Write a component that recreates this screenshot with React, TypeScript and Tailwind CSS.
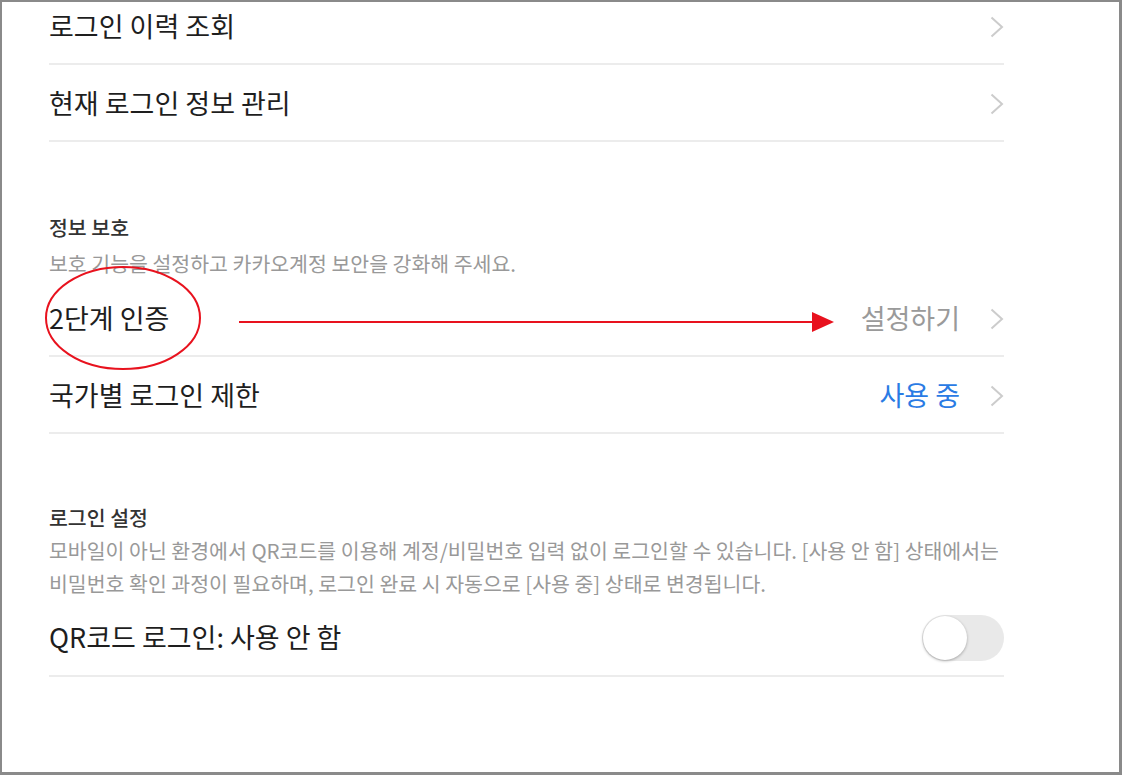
const font = { fontFamily: '"Noto Sans CJK KR", "Noto Sans", sans-serif' };

function Chevron() {
  return (
    <svg width="14" height="22" viewBox="0 0 14 22" fill="none" className="shrink-0">
      <path d="M1.5 1.5 L12 11 L1.5 20.5" stroke="#cccccc" strokeWidth="2" />
    </svg>
  );
}

function Row({ label, value, valueClass }: { label: string; value?: string; valueClass?: string }) {
  return (
    <>
      <div className="h-[75px] flex items-center justify-between pt-[2px]">
        <span className="text-[27px] text-[#1e1e1e]">{label}</span>
        <div className="flex items-center gap-[30px]">
          {value && <span className={`text-[27px] ${valueClass}`}>{value}</span>}
          <Chevron />
        </div>
      </div>
      <div className="h-[2px] bg-[#ececec]" />
    </>
  );
}

export default function App() {
  return (
    <div
      className="relative w-[1122px] h-[775px] overflow-hidden bg-white border-l-2 border-t-2 border-r-[3px] border-b-[3px] border-[#8a8a8a]"
      style={font}
    >
      <div className="ml-[47px] w-[955px] -mt-[14px]">
        <Row label="로그인 이력 조회" />
        <Row label="현재 로그인 정보 관리" />

        {/* 정보 보호 */}
        <div className="pt-[71px]">
          <div className="text-[20.5px] leading-[28px] font-medium text-[#333]">정보 보호</div>
          <div className="mt-[6px] text-[20.5px] leading-[33px] text-[#999]">
            보호 기능을 설정하고 카카오계정 보안을 강화해 주세요.
          </div>
        </div>
        <Row label="2단계 인증" value="설정하기" valueClass="text-[#9a9a9a]" />
        <Row label="국가별 로그인 제한" value="사용 중" valueClass="text-[#2a7be4]" />

        {/* 로그인 설정 */}
        <div className="pt-[69px]">
          <div className="text-[20.5px] leading-[28px] font-medium text-[#333]">로그인 설정</div>
          <div className="mt-[3px] text-[20.5px] leading-[33px] text-[#999]">
            모바일이 아닌 환경에서 QR코드를 이용해 계정/비밀번호 입력 없이 로그인할 수 있습니다. [사용 안 함] 상태에서는
            비밀번호 확인 과정이 필요하며, 로그인 완료 시 자동으로 [사용 중] 상태로 변경됩니다.
          </div>
        </div>
        <div className="h-[75px] flex items-center justify-between">
          <span className="text-[27px] text-[#1e1e1e]">QR코드 로그인: 사용 안 함</span>
          <div className="w-[82px] h-[46px] rounded-full bg-[#e9e9e9] flex items-center px-[1px]">
            <div className="w-[44px] h-[44px] rounded-full bg-white shadow-[0_1px_3px_rgba(0,0,0,0.3)]" />
          </div>
        </div>
        <div className="h-[2px] bg-[#ececec]" />
      </div>

      {/* red annotation */}
      <svg className="absolute left-0 top-0 pointer-events-none" width="1122" height="775">
        <ellipse cx="121" cy="316" rx="77" ry="51" fill="none" stroke="#e8121e" strokeWidth="2" />
        <line x1="237" y1="320" x2="812" y2="320" stroke="#e8121e" strokeWidth="2" />
        <polygon points="810,310 832,320 810,330" fill="#e8121e" />
      </svg>
    </div>
  );
}
